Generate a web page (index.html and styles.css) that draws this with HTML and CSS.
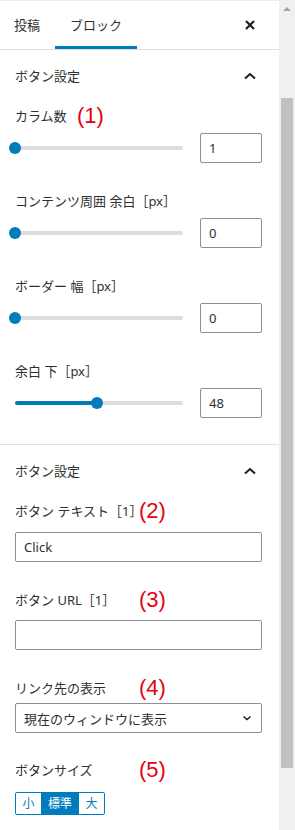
FILE: index.html
```html
<!DOCTYPE html>
<html lang="ja">
<head>
  <meta charset="UTF-8" />
  <meta name="viewport" content="width=device-width, initial-scale=1.0"/>
  <title>ブロック設定</title>
  <link rel="stylesheet" href="styles.css">
</head>
<body>
  <div class="page">
    <div class="sidebar">
      <div class="tabs">
        <button class="tab">投稿</button>
        <button class="tab active">ブロック</button>
        <button class="close" aria-label="閉じる">
          <svg width="24" height="24" viewBox="0 0 24 24"><path d="M8 8l8 8M16 8l-8 8" stroke="#1e1e1e" stroke-width="2.2" fill="none"/></svg>
        </button>
      </div>

      <div class="panel">
        <div class="panel-title">
          <span>ボタン設定</span>
          <svg width="24" height="24" viewBox="0 0 24 24"><path d="M7 14.5l5-4.5 5 4.5" stroke="#1e1e1e" stroke-width="2" fill="none"/></svg>
        </div>
        <div class="panel-body">
          <div class="field">
            <label class="field-label">カラム数<span class="note note-first">(1)</span></label>
            <div class="range-row">
              <div class="range">
                <div class="range-track"></div>
                <div class="range-fill" style="width: 0%"></div>
                <div class="range-thumb" style="left: 0%"></div>
              </div>
              <input class="num" type="text" value="1">
            </div>
          </div>
          <div class="field">
            <label class="field-label">コンテンツ周囲 余白［px］</label>
            <div class="range-row">
              <div class="range">
                <div class="range-track"></div>
                <div class="range-fill" style="width: 0%"></div>
                <div class="range-thumb" style="left: 0%"></div>
              </div>
              <input class="num" type="text" value="0">
            </div>
          </div>
          <div class="field">
            <label class="field-label">ボーダー 幅［px］</label>
            <div class="range-row">
              <div class="range">
                <div class="range-track"></div>
                <div class="range-fill" style="width: 0%"></div>
                <div class="range-thumb" style="left: 0%"></div>
              </div>
              <input class="num" type="text" value="0">
            </div>
          </div>
          <div class="field">
            <label class="field-label">余白 下［px］</label>
            <div class="range-row">
              <div class="range">
                <div class="range-track"></div>
                <div class="range-fill" style="width: 49%"></div>
                <div class="range-thumb" style="left: 49%"></div>
              </div>
              <input class="num" type="text" value="48">
            </div>
          </div>
        </div>
      </div>

      <div class="panel">
        <div class="panel-title">
          <span>ボタン設定</span>
          <svg width="24" height="24" viewBox="0 0 24 24"><path d="M7 14.5l5-4.5 5 4.5" stroke="#1e1e1e" stroke-width="2" fill="none"/></svg>
        </div>
        <div class="panel-body">
          <div class="field">
            <label class="field-label gap-text">ボタン テキスト［1］<span class="note">(2)</span></label>
            <input class="text" type="text" value="Click">
          </div>
          <div class="field">
            <label class="field-label gap-url">ボタン URL［1］<span class="note">(3)</span></label>
            <input class="text" type="text" value="">
          </div>
          <div class="field">
            <label class="field-label gap-select">リンク先の表示<span class="note">(4)</span></label>
            <div class="select">
              <span>現在のウィンドウに表示</span>
              <svg width="12" height="12" viewBox="0 0 12 12"><path d="M2.5 4.5l3.5 3 3.5-3" stroke="#1e1e1e" stroke-width="1.5" fill="none"/></svg>
            </div>
          </div>
          <div class="field field-size">
            <label class="field-label gap-size">ボタンサイズ<span class="note">(5)</span></label>
            <div class="btn-group">
              <button class="seg seg-s">小</button>
              <button class="seg seg-m active">標準</button>
              <button class="seg seg-l">大</button>
            </div>
          </div>
        </div>
      </div>
    </div>

    <div class="scrollbar">
      <div class="scroll-arrow"><span></span></div>
      <div class="scroll-thumb"></div>
    </div>
  </div>
</body>
</html>
```

FILE: styles.css
```css
:root {
  --fg: #1e1e1e;
  --label: #2f2f2f;
  --accent: #007cba;
  --line: #e0e0e0;
  --input-border: #8c8f94;
  --note: #e60012;
}

body {
  margin: 0;
  font-family: 'Noto Sans', 'Noto Sans CJK JP', sans-serif;
  font-size: 13px;
  color: var(--fg);
  background: #ffffff;
  overflow: hidden;
}

button {
  font-family: inherit;
  font-size: 13px;
  color: var(--fg);
  background: none;
  border: none;
  padding: 0;
  cursor: pointer;
}

.page {
  display: flex;
  height: 830px;
}

.sidebar {
  width: 279px;
  background: #ffffff;
}

/* header tabs */
.tabs {
  display: flex;
  height: 48px;
  border-top: 1px solid #ececec;
  border-bottom: 1px solid var(--line);
}

.tab {
  padding: 0 15px;
  line-height: 20px;
  color: var(--label);
}

.tab:first-child {
  padding-left: 14px;
}

.tab.active {
  box-shadow: inset 0 -3px 0 var(--accent);
}

.close {
  margin-left: auto;
  margin-right: 17px;
  width: 24px;
  display: flex;
  align-items: center;
}

/* panels */
.panel {
  border-bottom: 1px solid var(--line);
}

.panel:last-child {
  border-bottom: none;
}

.panel-title {
  height: 52px;
  display: flex;
  align-items: center;
  justify-content: space-between;
  padding: 0 17px 0 15px;
  line-height: 20px;
  color: var(--label);
}

.panel-title svg {
  display: block;
}

.panel-body {
  padding: 4px 17px 26px 15px;
}

.field {
  margin-bottom: 28px;
}

.field:last-child {
  margin-bottom: 0;
}

.field-size {
  margin-top: -1px;
}

.field-label {
  display: block;
  position: relative;
  height: 20px;
  line-height: 20px;
  margin-bottom: 7px;
  white-space: nowrap;
  color: var(--label);
}

.gap-text { margin-bottom: 11px; }
.gap-url { margin-bottom: 10px; }
.gap-select { margin-bottom: 5px; }
.gap-size { margin-bottom: 12px; }

.note {
  position: absolute;
  left: 124px;
  top: -4px;
  font-family: 'Liberation Sans', Arial, sans-serif;
  font-size: 22px;
  line-height: 28px;
  color: var(--note);
}

.note-first {
  left: 62px;
}

/* range control */
.range-row {
  display: flex;
  align-items: center;
  height: 30px;
}

.range {
  position: relative;
  width: 168px;
  height: 12px;
  margin-right: 17px;
}

.range-track,
.range-fill {
  position: absolute;
  left: 0;
  top: 4px;
  height: 4px;
  border-radius: 2px;
}

.range-track {
  right: 0;
  background: #dddddd;
}

.range-fill {
  background: var(--accent);
}

.range-thumb {
  position: absolute;
  top: 0;
  width: 12px;
  height: 12px;
  margin-left: -6px;
  border-radius: 50%;
  background: var(--accent);
}

input {
  font-family: inherit;
  font-size: 13px;
  color: var(--label);
  box-sizing: border-box;
  height: 30px;
  border: 1px solid var(--input-border);
  border-radius: 2px;
  padding: 0 8px;
  margin: 0;
  outline: none;
}

.num {
  width: 62px;
}

.text {
  display: block;
  width: 247px;
}

.select {
  box-sizing: border-box;
  width: 247px;
  height: 30px;
  border: 1px solid var(--input-border);
  border-radius: 2px;
  padding: 0 8px;
  display: flex;
  align-items: center;
  justify-content: space-between;
  color: var(--label);
}

.select svg {
  display: block;
}

/* size buttons */
.btn-group {
  display: inline-flex;
  border: 1px solid var(--accent);
  border-radius: 2px;
  height: 21px;
}

.seg {
  font-size: 12px;
  line-height: 21px;
  color: var(--accent);
  text-align: center;
}

.seg + .seg {
  border-left: 1px solid var(--accent);
}

.seg-s { width: 25px; }
.seg-m { width: 37px; }
.seg-l { width: 26px; }

.seg.active {
  background: var(--accent);
  color: #ffffff;
}

/* fake window scrollbar */
.scrollbar {
  width: 16px;
  background: #f0f0f0;
}

.scroll-arrow {
  height: 17px;
  display: flex;
  align-items: center;
  justify-content: center;
}

.scroll-arrow span {
  width: 0;
  height: 0;
  border-left: 4px solid transparent;
  border-right: 4px solid transparent;
  border-bottom: 4px solid #a3a3a3;
}

.scroll-thumb {
  margin: 81px 2px 0;
  height: 670px;
  background: #c1c1c1;
}
```
